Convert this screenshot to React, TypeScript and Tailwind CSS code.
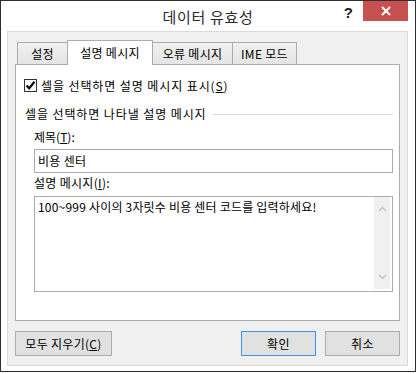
import React from "react";

const kr = { fontFamily: '"Noto Sans CJK KR", "Noto Sans", sans-serif' };

export default function App() {
  return (
    <div className="w-[416px] h-[374px] bg-white" style={kr}>
      <div className="w-[416px] h-[372px] border border-[#2e2e2e] bg-white flex flex-col">
        {/* title bar */}
        <div className="h-[30px] grid grid-cols-[1fr_auto_1fr] items-start">
          <div />
          <div className="h-[29px] flex items-center text-[15px] leading-none text-[#2a2a2a] pt-[1px] tracking-[0.7px]">
            데이터 유효성
          </div>
          <div className="flex justify-end items-start">
            <div
              className="mt-[4px] mr-[10px] text-[15px] font-bold leading-none text-[#222]"
              style={{ fontFamily: '"Liberation Sans", Arial, sans-serif' }}
            >
              ?
            </div>
            <div className="w-[45px] h-[20px] bg-[#c75050] mr-[7px] flex items-center justify-center">
              <svg width="10" height="10" viewBox="0 0 10 10">
                <path d="M1 1 L9 9 M9 1 L1 9" stroke="#fff" strokeWidth="2" />
              </svg>
            </div>
          </div>
        </div>
        {/* gray client panel */}
        <div className="ml-[6px] mr-[7px] h-[335px] border border-[#dadada] bg-[#f0f0f0] px-[7px] flex flex-col">
          {/* tabs */}
          <div className="mt-[8px] h-[24px] flex items-end pl-[2px] text-[12px] text-black relative z-10 tracking-[0.3px]">
            <div className="w-[50px] h-[22px] border-l border-t border-[#acacac] bg-gradient-to-b from-[#f0f0f0] to-[#e5e5e5] flex items-center justify-center">
              설정
            </div>
            <div className="w-[86px] h-[25px] -mb-[1px] border-l border-t border-r border-[#acacac] bg-white flex items-center justify-center pb-[1px]">
              설명 메시지
            </div>
            <div className="w-[80px] h-[22px] border-t border-r border-[#acacac] bg-gradient-to-b from-[#f0f0f0] to-[#e5e5e5] flex items-center justify-center">
              오류 메시지
            </div>
            <div className="w-[64px] h-[22px] border-t border-r border-[#acacac] bg-gradient-to-b from-[#f0f0f0] to-[#e5e5e5] flex items-center justify-center">
              IME 모드
            </div>
          </div>
          {/* tab panel */}
          <div className="h-[257px] border border-[#acacac] bg-white flex flex-col text-[12px] text-black leading-none">
            <div className="mt-[14px] ml-[8px] h-[13px] flex items-center">
              <div className="w-[13px] h-[13px] border border-[#333] bg-white flex items-center justify-center">
                <svg width="11" height="11" viewBox="0 0 11 11">
                  <path d="M1.5 5.5 L4.2 8.3 L9.5 1.8" fill="none" stroke="#111" strokeWidth="2.3" />
                </svg>
              </div>
              <span className="ml-[4px] tracking-[0.9px]">
                셀을 선택하면 설명 메시지 표시(<u>S</u>)
              </span>
            </div>
            <div className="mt-[14px] ml-[9px] mr-[6px] h-[16px] flex items-center">
              <span className="tracking-[0.9px]">셀을 선택하면 나타낼 설명 메시지</span>
              <div className="flex-1 ml-[6px] h-px bg-[#dcdcdc]" />
            </div>
            <div className="pl-[18px] pr-[6px] flex flex-col">
              <div className="mt-[7px] h-[16px] flex items-center">
                제목(<u>T</u>):
              </div>
              <div className="mt-[4px] h-[24px] border border-[#ababab] flex items-center pl-[3px] tracking-[0.3px]">
                비용 센터
              </div>
              <div className="mt-[2px] h-[16px] flex items-center tracking-[0.3px]">
                설명 메시지(<u>I</u>):
              </div>
              <div className="mt-[5px] h-[96px] border border-[#ababab] flex">
                <div className="flex-1 pl-[3px] pt-[4px] tracking-[0.2px]">
                  100~999 사이의 3자릿수 비용 센터 코드를 입력하세요!
                </div>
                <div className="w-[16px] mb-[2px] mr-[2px] bg-[#f0f0f0] flex flex-col justify-between items-center py-[9px]">
                  <svg width="9" height="6" viewBox="0 0 9 6">
                    <path d="M1 5 L4.5 1.5 L8 5" fill="none" stroke="#c4c4c4" strokeWidth="1.5" />
                  </svg>
                  <svg width="9" height="6" viewBox="0 0 9 6">
                    <path d="M1 1 L4.5 4.5 L8 1" fill="none" stroke="#c4c4c4" strokeWidth="1.5" />
                  </svg>
                </div>
              </div>
            </div>
          </div>
          {/* buttons */}
          <div className="mt-[10px] flex items-center text-[12px] text-black">
            <div className="w-[97px] h-[25px] border border-[#adadad] bg-[#e1e1e1] flex items-center justify-center tracking-[0.3px]">
              모두 지우기(<u>C</u>)
            </div>
            <div className="flex-1" />
            <div className="w-[75px] h-[25px] border border-[#3c94e6] bg-[#e1e1e1] flex items-center justify-center tracking-[0.5px]">
              확인
            </div>
            <div className="w-[75px] h-[25px] ml-[9px] border border-[#adadad] bg-[#e1e1e1] flex items-center justify-center tracking-[0.5px]">
              취소
            </div>
          </div>
        </div>
      </div>
    </div>
  );
}
